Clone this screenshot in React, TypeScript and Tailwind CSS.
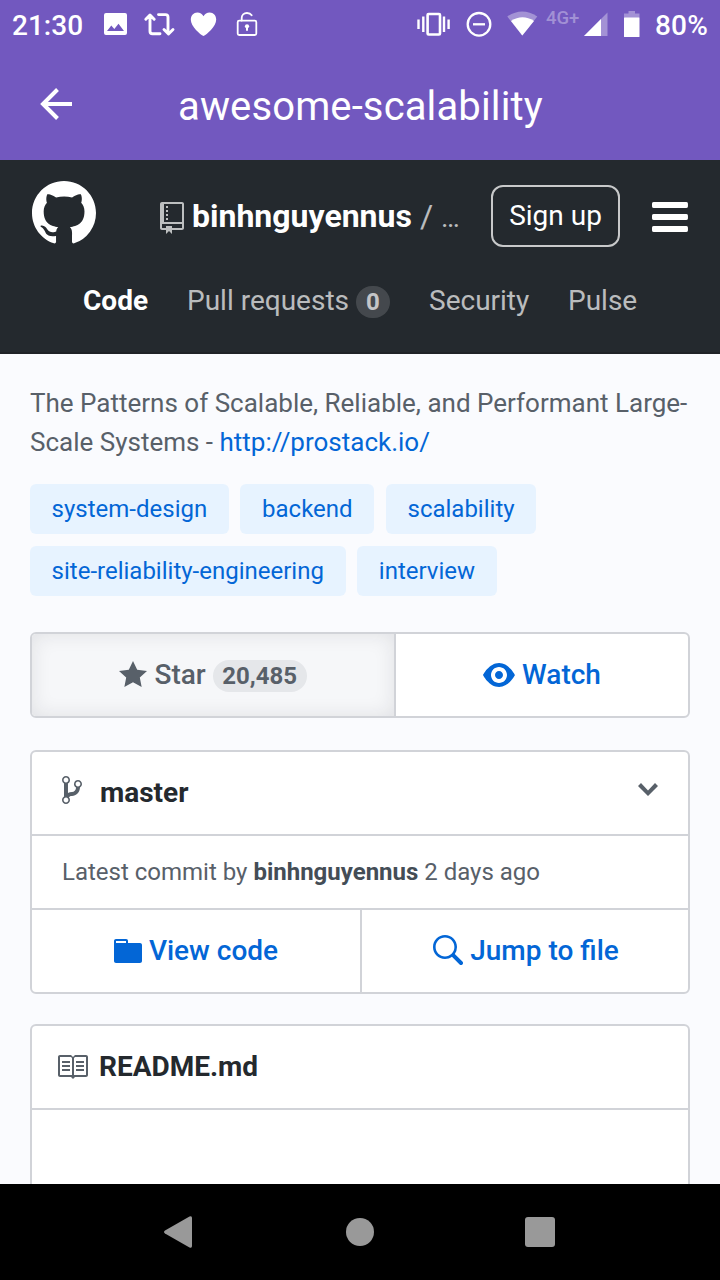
import type { ReactNode } from "react";

const paths = {
  mark: "M8 0C3.58 0 0 3.58 0 8c0 3.54 2.29 6.53 5.47 7.59.4.07.55-.17.55-.38 0-.19-.01-.82-.01-1.49-2.01.37-2.53-.49-2.69-.94-.09-.23-.48-.94-.82-1.13-.28-.15-.68-.52-.01-.53.63-.01 1.08.58 1.23.82.72 1.21 1.87.87 2.33.66.07-.52.28-.87.51-1.07-1.78-.2-3.64-.89-3.64-3.95 0-.87.31-1.59.82-2.15-.08-.2-.36-1.02.08-2.12 0 0 .67-.21 2.2.82.64-.18 1.32-.27 2-.27.68 0 1.36.09 2 .27 1.53-1.04 2.2-.82 2.2-.82.44 1.1.16 1.92.08 2.12.51.56.82 1.27.82 2.15 0 3.07-1.87 3.75-3.65 3.95.29.25.54.73.54 1.48 0 1.07-.01 1.93-.01 2.2 0 .21.15.46.55.38A8.013 8.013 0 0 0 16 8c0-4.42-3.58-8-8-8z",
  repo: "M4 9H3V8h1v1zm0-3H3v1h1V6zm0-2H3v1h1V4zm0-2H3v1h1V2zm8-1v12c0 .55-.45 1-1 1H6v2l-1.5-1.5L3 16v-2H1c-.55 0-1-.45-1-1V1c0-.55.45-1 1-1h10c.55 0 1 .45 1 1zm-1 10H1v2h2v-1h3v1h5v-2zm0-10H2v9h9V1z",
  bars: "M11.41 9H.59C0 9 0 8.59 0 8c0-.59 0-1 .59-1H11.4c.59 0 .59.41.59 1 0 .59 0 1-.59 1h.01zm0-4H.59C0 5 0 4.59 0 4c0-.59 0-1 .59-1H11.4c.59 0 .59.41.59 1 0 .59 0 1-.59 1h.01zM.59 11H11.4c.59 0 .59.41.59 1 0 .59 0 1-.59 1H.59C0 13 0 12.59 0 12c0-.59 0-1 .59-1z",
  star: "M14 6l-4.9-.64L7 1 4.9 5.36 0 6l3.6 3.26L2.67 14 7 11.67 11.33 14l-.93-4.74L14 6z",
  eye: "M8.06 2C3 2 0 8 0 8s3 6 8.06 6C13 14 16 8 16 8s-3-6-7.94-6zM8 12c-2.2 0-4-1.78-4-4 0-2.2 1.8-4 4-4 2.22 0 4 1.8 4 4 0 2.22-1.78 4-4 4zm2-4c0 1.11-.89 2-2 2-1.11 0-2-.89-2-2 0-1.11.89-2 2-2 1.11 0 2 .89 2 2z",
  branch: "M10 5c0-1.11-.89-2-2-2a1.993 1.993 0 0 0-1 3.72v.3c-.02.52-.23.98-.63 1.38-.4.4-.86.61-1.38.63-.83.02-1.48.16-2 .45V4.72a1.993 1.993 0 0 0-1-3.72C.88 1 0 1.89 0 3a2 2 0 0 0 1 1.72v6.56c-.59.35-1 .99-1 1.72 0 1.11.89 2 2 2 1.11 0 2-.89 2-2 0-.53-.2-1-.53-1.36.09-.06.48-.41.59-.47.25-.11.56-.17.94-.17 1.05-.05 1.95-.45 2.75-1.25S8.95 7.77 9 6.73h-.02C9.59 6.37 10 5.73 10 5zM2 1.8c.66 0 1.2.55 1.2 1.2 0 .65-.55 1.2-1.2 1.2C1.35 4.2.8 3.65.8 3c0-.65.55-1.2 1.2-1.2zm0 12.41c-.66 0-1.2-.55-1.2-1.2 0-.65.55-1.2 1.2-1.2.65 0 1.2.55 1.2 1.2 0 .65-.55 1.2-1.2 1.2zm6-8c-.66 0-1.2-.55-1.2-1.2 0-.65.55-1.2 1.2-1.2.65 0 1.2.55 1.2 1.2 0 .65-.55 1.2-1.2 1.2z",
  chevron: "M5 11L0 6l1.5-1.5L5 8.25 8.5 4.5 10 6l-5 5z",
  folder: "M13 4H7V3c0-.66-.31-1-1-1H1c-.55 0-1 .45-1 1v10c0 .55.45 1 1 1h12c.55 0 1-.45 1-1V5c0-.55-.45-1-1-1zM6 4H1V3h5v1z",
  search: "M15.7 13.3l-3.81-3.83A5.93 5.93 0 0 0 13 6c0-3.31-2.69-6-6-6S1 2.69 1 6s2.69 6 6 6c1.3 0 2.48-.41 3.47-1.11l3.83 3.81c.19.2.45.3.7.3.25 0 .52-.09.7-.3a.996.996 0 0 0 0-1.41v.01zM7 10.7c-2.59 0-4.7-2.11-4.7-4.7 0-2.59 2.11-4.7 4.7-4.7 2.59 0 4.7 2.11 4.7 4.7 0 2.59-2.11 4.7-4.7 4.7z",
  book: "M3 5h4v1H3V5zm0 3h4V7H3v1zm0 2h4V9H3v1zm11-5h-4v1h4V5zm0 2h-4v1h4V7zm0 2h-4v1h4V9zm2-6v9c0 .55-.45 1-1 1H9.500l-1 1-1-1H2c-.55 0-1-.45-1-1V3c0-.55.45-1 1-1h5.500l1 1 1-1H15c.55 0 1 .45 1 1zm-8 .5L7.500 3H2v9h6V3.500zm7-.5H9.500l-.5.5V12h6V3z",
};

function Octicon({ name, units = 16, scale = 2, className = "" }: { name: keyof typeof paths; units?: number; scale?: number; className?: string }) {
  return (
    <svg className={`shrink-0 ${className}`} width={units * scale} height={16 * scale} viewBox={`0 0 ${units} 16`} fill="currentColor">
      <path fillRule="evenodd" d={paths[name]} />
    </svg>
  );
}

function StatusBar() {
  return (
    <div className="flex h-12 items-start justify-between text-[28px] leading-[52px] font-medium">
      <div className="flex pl-3">
        <span className="w-[91px]">21:30</span>
        <svg width="160" height="48" viewBox="103 0 160 48" fill="none" stroke="#fff">
          <path fill="#fff" stroke="none" fillRule="evenodd" d="M106 13h19q2 0 2 2v18q0 2-2 2h-19q-2 0-2-2V15q0-2 2-2zM107 31h17l-5.500-7.300-4.200 5.300-3-3.500z" />
          <path strokeWidth="2.900" strokeLinecap="round" strokeLinejoin="round" d="M145.800 19.300 150 15l4.200 4.300M150 15.500V31.200q0 2.500 2.500 2.500h7.500M158.500 14.600h7q2.500 0 2.500 2.500V33M164 29.500l4.500 4.500 4.500-4.500" />
          <path fill="#fff" stroke="none" d="M203.500 36c-3-1.300-12.700-9.500-12.700-16.300 0-4.200 2.900-7.200 6.500-7.200 2.700 0 5 1.600 6.200 3.700 1.200-2.100 3.500-3.700 6.200-3.700 3.700 0 6.500 3 6.500 7.200 0 6.800-9.700 15-12.700 16.300z" />
          <rect x="237.700" y="20.700" width="18.600" height="14.300" rx="1.500" strokeWidth="1.800" />
          <path strokeWidth="1.800" strokeLinecap="round" d="M241.700 20.500V18c0-3 2.200-5 5.300-5 2 0 3.700.8 4.700 2.300" />
          <circle cx="247" cy="26.300" r="2.100" fill="#fff" stroke="none" />
          <path strokeWidth="2" d="M247 26v4.800" />
        </svg>
      </div>
      <div className="flex pr-3">
        <svg width="130" height="48" viewBox="415 0 130 48" fill="none" stroke="#fff">
          <rect x="427.600" y="14" width="12.400" height="20.500" rx="1" strokeWidth="2.600" />
          <path strokeWidth="2.400" d="M423.300 16.500v15.500M444 16.500v15.500M418.500 19.500v9.500M448.600 19.500v9.500" />
          <circle cx="479" cy="24.300" r="11.300" strokeWidth="2.300" />
          <path strokeWidth="2.300" d="M473 24.300h12" />
          <path fill="#fff" fillOpacity=".35" stroke="none" d="M507.300 16.500Q522 6.500 537.300 16.500L522.300 35.500z" />
          <path fill="#fff" stroke="none" d="M511 21q11.500-7.500 23 0l-11.700 14.500z" />
        </svg>
        <span className="w-[39px] pl-[1px] text-[18.500px] leading-[37px] text-white/35">4G+</span>
        <svg width="71" height="48" viewBox="584 0 71 48" fill="#fff">
          <path fillOpacity=".35" d="M584 36l23.500-23.500V36z" />
          <path d="M584 36l17-17v17z" />
          <path fillOpacity=".35" d="M624 18v-4.500h4.500V11h6.500v2.500h4.500V18z" />
          <rect x="624" y="17.500" width="15.500" height="19.500" rx=".5" />
        </svg>
        <span className="tracking-[0.2px]">80%</span>
      </div>
    </div>
  );
}

function Tag({ children }: { children: ReactNode }) {
  return <span className="h-[50px] rounded-md bg-[#e7f3ff] px-[21.600px] text-[24px] leading-[50px] text-[#0366d6]">{children}</span>;
}

export default function App() {
  return (
    <div className="flex h-[1280px] w-[720px] flex-col overflow-hidden bg-[#fafbfe] font-['Roboto',sans-serif] whitespace-nowrap text-[#24292e]">
      <header className="h-[160px] shrink-0 bg-[#7258bf] text-white">
        <StatusBar />
        <div className="grid h-[112px] grid-cols-[178px_1fr] items-start">
          <svg className="mt-10 ml-10" width="32" height="32" viewBox="0 0 32 32" fill="none" stroke="#fff" strokeWidth="4">
            <path d="M17.500 1.500 3 16l14.500 14.500M3 16h29" />
          </svg>
          <h1 className="text-[40px] leading-[118px] tracking-[0.13px]">awesome-scalability</h1>
        </div>
      </header>

      <section className="h-[194px] shrink-0 border-b-2 border-[#1f2327] bg-[#24292e] text-white">
        <div className="flex h-[112px] items-center pr-8 pl-8">
          <Octicon name="mark" scale={4} className="-mt-1.5" />
          <Octicon name="repo" units={12} className="mt-1 ml-16 text-white/70" />
          <strong className="ml-2 w-[228px] text-[32px] font-bold">binhnguyennus</strong>
          <span className="flex w-[71px] items-baseline text-[32px] text-white/70">
            <span className="w-[21px]">/</span>
            <span className="text-[28px]">…</span>
          </span>
          <button className="h-[62px] w-[129px] rounded-xl border-2 border-white/75 text-[28px]">Sign up</button>
          <Octicon name="bars" units={12} scale={3} className="mt-0.5 ml-8" />
        </div>
        <nav className="flex h-[58px] items-center pl-[83px] text-[28px] text-white/70">
          <strong className="w-[104px] text-white">Code</strong>
          <span className="w-[169px]">Pull requests</span>
          <span className="mt-0.5 mr-[39px] h-8 w-[34px] rounded-full bg-white/15 text-center text-[24px] leading-8 font-bold">0</span>
          <span className="w-[139px]">Security</span>
          <span>Pulse</span>
        </nav>
      </section>

      <main className="flex min-h-0 flex-1 flex-col overflow-hidden px-[30px] pt-[30px]">
        <p className="text-[26px] leading-[39px] text-[#586069]">
          The Patterns of Scalable, Reliable, and Performant Large-
          <br />
          Scale Systems - <a className="text-[#0366d6]">http://prostack.io/</a>
        </p>
        <div className="mt-[21.500px] flex flex-wrap gap-x-[11.700px] gap-y-3">
          <Tag>system-design</Tag>
          <Tag>backend</Tag>
          <Tag>scalability</Tag>
          <Tag>site-reliability-engineering</Tag>
          <Tag>interview</Tag>
        </div>

        <div className="mt-[36.500px] flex h-[86px] shrink-0 overflow-hidden rounded-md border-2 border-[#d1d3d8] bg-white text-[28px] font-medium">
          <div className="flex w-[364px] items-center justify-center border-r-2 border-[#d1d3d8] bg-[#f6f7f9] text-[#586069] shadow-[inset_0_0_20px_rgba(27,31,35,0.1)]">
            <Octicon name="star" units={14} />
            <span className="ml-[7px]">Star</span>
            <span className="mt-0.5 ml-[7px] h-8 rounded-full bg-[#e5e7ea] px-[9.500px] text-[24px] leading-8 font-bold">20,485</span>
          </div>
          <div className="flex flex-1 items-center justify-center text-[#0366d6]">
            <Octicon name="eye" />
            <span className="ml-[7px]">Watch</span>
          </div>
        </div>

        <div className="mt-8 h-[244px] shrink-0 rounded-md border-2 border-[#d1d3d8] bg-white">
          <div className="flex h-[84px] items-center border-b-2 border-[#d1d3d8] px-[30px]">
            <Octicon name="branch" units={10} className="-mt-1.5 text-[#586069]" />
            <strong className="ml-[18px] flex-1 text-[28px]">master</strong>
            <Octicon name="chevron" units={10} className="-mt-1.5 text-[#586069]" />
          </div>
          <div className="h-[74px] border-b-2 border-[#d1d3d8] px-[30px] text-[24px] leading-[72px] text-[#586069]">
            Latest commit by <strong className="text-[#444d56]">binhnguyennus</strong> 2 days ago
          </div>
          <div className="flex h-[82px] text-[28px] font-medium text-[#0366d6]">
            <div className="flex w-[330px] items-center justify-center border-r-2 border-[#d1d3d8]">
              <Octicon name="folder" units={14} />
              <span className="ml-[7px]">View code</span>
            </div>
            <div className="flex flex-1 items-center justify-center">
              <Octicon name="search" />
              <span className="ml-[7px]">Jump to file</span>
            </div>
          </div>
        </div>

        <div className="mt-[30px] h-[200px] shrink-0 rounded-t-md border-2 border-[#d1d3d8] bg-white">
          <div className="flex h-[84px] items-center border-b-2 border-[#d1d3d8] pl-6 text-[28px]">
            <Octicon name="book" className="text-[#586069]" />
            <strong className="ml-[11px]">README.md</strong>
          </div>
        </div>
      </main>

      <footer className="grid h-24 shrink-0 grid-cols-3 place-items-center bg-black px-[90px]">
        <svg className="mr-1" width="28" height="32" viewBox="0 0 28 32" fill="#999">
          <path d="M1 14.500 25.500.6Q28-.6 28 2v28q0 2.600-2.500 1.400L1 17.500q-2-1.500 0-3z" />
        </svg>
        <span className="size-7 rounded-full bg-[#999]" />
        <span className="size-[30px] rounded-[3px] bg-[#999]" />
      </footer>
    </div>
  );
}
